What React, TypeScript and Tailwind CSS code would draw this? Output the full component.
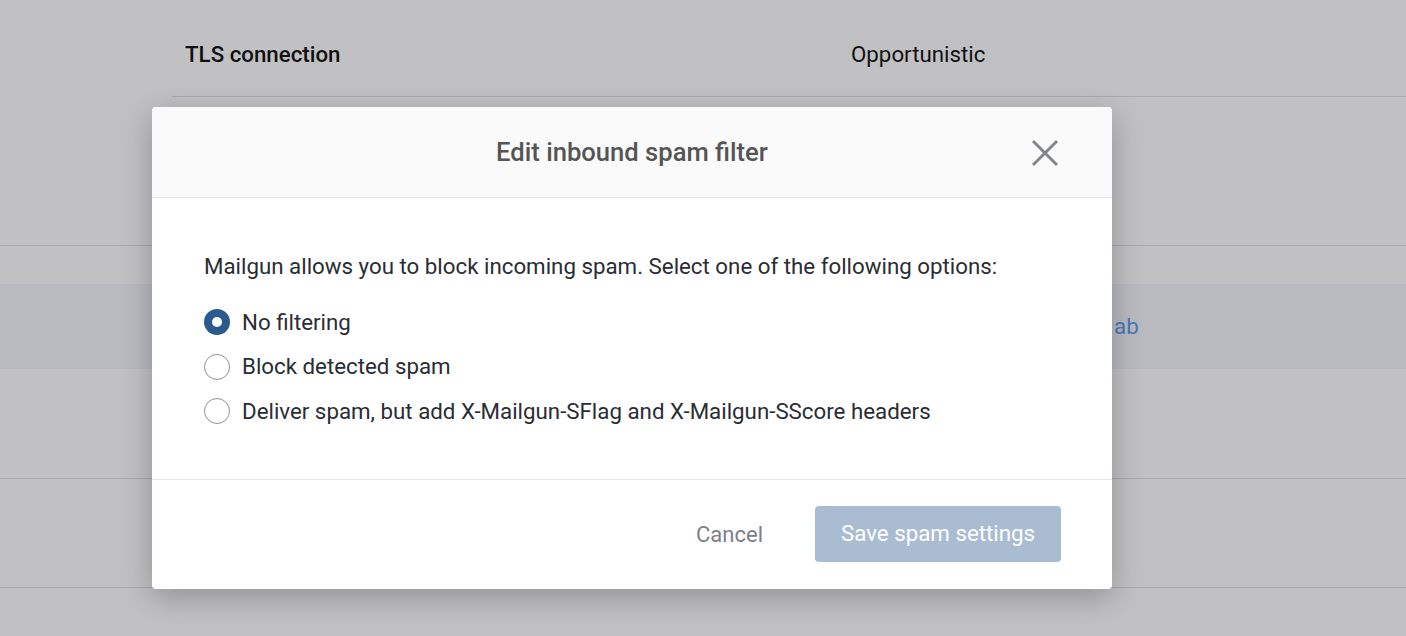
import { useState } from "react";

const OPTIONS = [
  { id: "none", label: "No filtering" },
  { id: "block", label: "Block detected spam" },
  { id: "flag", label: "Deliver spam, but add X-Mailgun-SFlag and X-Mailgun-SScore headers" },
];

function Radio({ checked }: { checked: boolean }) {
  return checked ? (
    <span className="flex h-[26px] w-[26px] shrink-0 items-center justify-center rounded-full bg-[#2b5a8e]">
      <span className="block h-[10px] w-[10px] rounded-full bg-white" />
    </span>
  ) : (
    <span className="block h-[26px] w-[26px] shrink-0 rounded-full border border-[#8c9097] bg-white" />
  );
}

export default function App() {
  const [choice, setChoice] = useState("none");

  return (
    <div className="relative h-[636px] w-[1406px] overflow-hidden bg-white font-['Roboto',sans-serif]">
      {/* page behind the modal */}
      <div className="flex flex-col">
        <div className="ml-[172px] flex h-[97px] items-center border-b border-[#dfe1e7] pt-[14px] text-[22.3px] text-[#161616]">
          <span className="w-[679px] pl-[13px] font-medium">TLS connection</span>
          <span>Opportunistic</span>
        </div>
        <div className="h-[149px] border-b border-[#dfe1e7]" />
        <div className="mt-[38px] flex h-[85px] items-center bg-[#f5f6fb] pl-[1114px]">
          <span className="text-[22.3px] text-[#5f9ff0]">ab</span>
        </div>
        <div className="h-[110px] border-b border-[#dfe1e7]" />
        <div className="h-[109px] border-b border-[#dfe1e7]" />
      </div>

      <div className="absolute inset-0 bg-[rgba(0,0,8,0.245)]" />

      {/* modal */}
      <div className="absolute left-[152px] top-[107px] w-[960px] overflow-hidden rounded-[4px] bg-white shadow-[0_8px_30px_rgba(0,0,0,0.25)]">
        <div className="relative flex h-[91px] items-center justify-center border-b border-[#e6e6e6] bg-[#fafafa]">
          <h2 className="text-[25.6px] font-medium text-[#555555]">Edit inbound spam filter</h2>
          <button type="button" className="absolute right-[52px] top-[31px] text-[#80868c]">
            <svg width="30" height="30" viewBox="0 0 30 30" fill="none" stroke="currentColor" strokeWidth="3">
              <path d="M3 3L27 27M27 3L3 27" />
            </svg>
          </button>
        </div>

        <div className="px-[52px] pb-[45px] pt-[56px] text-[22.3px] text-[#2a2d33]">
          <p className="leading-[24px]">
            Mailgun allows you to block incoming spam. Select one of the following options:
          </p>
          <div className="mt-[22px] flex flex-col">
            {OPTIONS.map((o) => (
              <label
                key={o.id}
                onClick={() => setChoice(o.id)}
                className="flex h-[44.5px] cursor-pointer items-center gap-[12px]"
              >
                <Radio checked={choice === o.id} />
                <span>{o.label}</span>
              </label>
            ))}
          </div>
        </div>

        <div className="flex h-[110px] items-center justify-end gap-[52px] border-t border-[#e6e6e6] pr-[51px]">
          <button type="button" className="text-[22px] text-[#7b8089]">Cancel</button>
          <button
            type="button"
            disabled
            className="h-[56px] w-[246px] rounded-[4px] bg-[#a9bcd2] text-[22.3px] text-white"
          >
            Save spam settings
          </button>
        </div>
      </div>
    </div>
  );
}
